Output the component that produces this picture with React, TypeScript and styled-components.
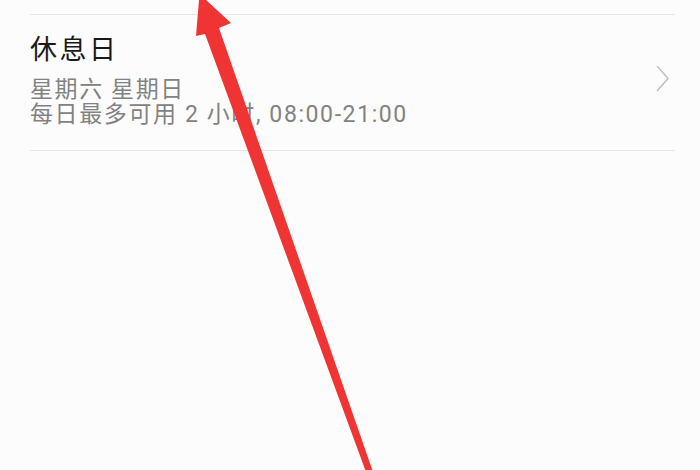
import React from "react";
import styled, { createGlobalStyle } from "styled-components";

/* ---------------- globals ---------------- */

const GlobalStyle = createGlobalStyle`
  html, body {
    margin: 0;
    padding: 0;
    background: #fcfcfc;
  }

  body {
    font-family: Roboto, "Noto Sans CJK SC", "Noto Sans", sans-serif;
  }
`;

/* ---------------- layout ---------------- */

const Screen = styled.div`
  position: relative;
  width: 700px;
  height: 470px;
  overflow: hidden;
  background: #fcfcfc;
`;

const List = styled.div`
  display: flex;
  flex-direction: column;
  padding: 14px 25px 0 30px;
`;

const Item = styled.div`
  display: flex;
  align-items: center;
  justify-content: space-between;
  padding: 17px 0 23px;
  border-top: 1px solid #e6e6e6;
  border-bottom: 1px solid #e6e6e6;
`;

const ItemText = styled.div`
  display: flex;
  flex-direction: column;
`;

const Title = styled.div`
  font-size: 27px;
  line-height: 36px;
  letter-spacing: 2.5px;
  color: #1a1a1a;
  margin-bottom: 9px;
`;

const Detail = styled.div`
  font-size: 23px;
  line-height: 25px;
  letter-spacing: 1.6px;
  color: #828282;
`;

const Chevron = styled.svg`
  width: 14px;
  height: 27px;
  margin-right: 5px;
  margin-bottom: 2px;
  flex-shrink: 0;
`;

/* red pointer drawn on top of the list */
const Pointer = styled.svg`
  position: absolute;
  left: 0;
  top: 0;
  width: 700px;
  height: 470px;
  pointer-events: none;
`;

/* ---------------- page ---------------- */

export default function App() {
  return (
    <>
      <GlobalStyle />
      <Screen>
        <List>
          <Item>
            <ItemText>
              <Title>休息日</Title>
              <Detail>星期六 星期日</Detail>
              <Detail>每日最多可用 2 小时, 08:00-21:00</Detail>
            </ItemText>
            <Chevron viewBox="0 0 14 27">
              <polyline
                points="1.5,1.5 12,13.5 1.5,25.5"
                fill="none"
                stroke="#c2c2c2"
                strokeWidth="1.6"
                strokeLinecap="round"
                strokeLinejoin="round"
              />
            </Chevron>
          </Item>
        </List>

        <Pointer viewBox="0 0 700 470">
          <polygon
            points="199.5,-6 231,23 219,28 373,472 366,472 205,34 196,36"
            fill="#f03434"
          />
        </Pointer>
      </Screen>
    </>
  );
}
